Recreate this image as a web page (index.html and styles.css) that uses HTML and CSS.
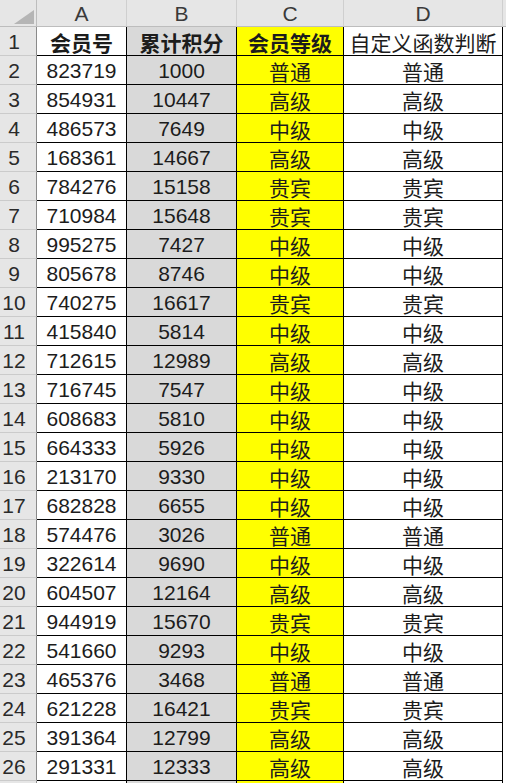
FILE: index.html
```html
<!DOCTYPE html>
<html>
<head>
<meta charset="utf-8">
<link rel="stylesheet" href="styles.css">
</head>
<body>
<div class="sheet">
  <div class="corner"><div class="tri"></div></div>
  <div class="colh">A</div><div class="colh">B</div><div class="colh">C</div><div class="colh">D</div><div class="colh e"></div>

  <div class="rowh">1</div><div class="cell a bold">会员号</div><div class="cell b bold">累计积分</div><div class="cell c bold">会员等级</div><div class="cell d">自定义函数判断</div><div class="ec"></div>
  <div class="rowh">2</div><div class="cell a">823719</div><div class="cell b">1000</div><div class="cell c">普通</div><div class="cell d">普通</div><div class="ec"></div>
  <div class="rowh">3</div><div class="cell a">854931</div><div class="cell b">10447</div><div class="cell c">高级</div><div class="cell d">高级</div><div class="ec"></div>
  <div class="rowh">4</div><div class="cell a">486573</div><div class="cell b">7649</div><div class="cell c">中级</div><div class="cell d">中级</div><div class="ec"></div>
  <div class="rowh">5</div><div class="cell a">168361</div><div class="cell b">14667</div><div class="cell c">高级</div><div class="cell d">高级</div><div class="ec"></div>
  <div class="rowh">6</div><div class="cell a">784276</div><div class="cell b">15158</div><div class="cell c">贵宾</div><div class="cell d">贵宾</div><div class="ec"></div>
  <div class="rowh">7</div><div class="cell a">710984</div><div class="cell b">15648</div><div class="cell c">贵宾</div><div class="cell d">贵宾</div><div class="ec"></div>
  <div class="rowh">8</div><div class="cell a">995275</div><div class="cell b">7427</div><div class="cell c">中级</div><div class="cell d">中级</div><div class="ec"></div>
  <div class="rowh">9</div><div class="cell a">805678</div><div class="cell b">8746</div><div class="cell c">中级</div><div class="cell d">中级</div><div class="ec"></div>
  <div class="rowh">10</div><div class="cell a">740275</div><div class="cell b">16617</div><div class="cell c">贵宾</div><div class="cell d">贵宾</div><div class="ec"></div>
  <div class="rowh">11</div><div class="cell a">415840</div><div class="cell b">5814</div><div class="cell c">中级</div><div class="cell d">中级</div><div class="ec"></div>
  <div class="rowh">12</div><div class="cell a">712615</div><div class="cell b">12989</div><div class="cell c">高级</div><div class="cell d">高级</div><div class="ec"></div>
  <div class="rowh">13</div><div class="cell a">716745</div><div class="cell b">7547</div><div class="cell c">中级</div><div class="cell d">中级</div><div class="ec"></div>
  <div class="rowh">14</div><div class="cell a">608683</div><div class="cell b">5810</div><div class="cell c">中级</div><div class="cell d">中级</div><div class="ec"></div>
  <div class="rowh">15</div><div class="cell a">664333</div><div class="cell b">5926</div><div class="cell c">中级</div><div class="cell d">中级</div><div class="ec"></div>
  <div class="rowh">16</div><div class="cell a">213170</div><div class="cell b">9330</div><div class="cell c">中级</div><div class="cell d">中级</div><div class="ec"></div>
  <div class="rowh">17</div><div class="cell a">682828</div><div class="cell b">6655</div><div class="cell c">中级</div><div class="cell d">中级</div><div class="ec"></div>
  <div class="rowh">18</div><div class="cell a">574476</div><div class="cell b">3026</div><div class="cell c">普通</div><div class="cell d">普通</div><div class="ec"></div>
  <div class="rowh">19</div><div class="cell a">322614</div><div class="cell b">9690</div><div class="cell c">中级</div><div class="cell d">中级</div><div class="ec"></div>
  <div class="rowh">20</div><div class="cell a">604507</div><div class="cell b">12164</div><div class="cell c">高级</div><div class="cell d">高级</div><div class="ec"></div>
  <div class="rowh">21</div><div class="cell a">944919</div><div class="cell b">15670</div><div class="cell c">贵宾</div><div class="cell d">贵宾</div><div class="ec"></div>
  <div class="rowh">22</div><div class="cell a">541660</div><div class="cell b">9293</div><div class="cell c">中级</div><div class="cell d">中级</div><div class="ec"></div>
  <div class="rowh">23</div><div class="cell a">465376</div><div class="cell b">3468</div><div class="cell c">普通</div><div class="cell d">普通</div><div class="ec"></div>
  <div class="rowh">24</div><div class="cell a">621228</div><div class="cell b">16421</div><div class="cell c">贵宾</div><div class="cell d">贵宾</div><div class="ec"></div>
  <div class="rowh">25</div><div class="cell a">391364</div><div class="cell b">12799</div><div class="cell c">高级</div><div class="cell d">高级</div><div class="ec"></div>
  <div class="rowh">26</div><div class="cell a">291331</div><div class="cell b">12333</div><div class="cell c">高级</div><div class="cell d">高级</div><div class="ec"></div>
  <div class="rowh"></div><div class="cell a"></div><div class="cell b"></div><div class="cell c"></div><div class="cell d"></div><div class="ec"></div>
</div>
</body>
</html>
```
FILE: styles.css
```css
html, body {
  margin: 0;
  padding: 0;
  background: #ffffff;
  overflow: hidden;
}

.sheet {
  display: grid;
  grid-template-columns: 37px 90px 110px 107px 159px 3px;
  grid-template-rows: 27px;
  grid-auto-rows: 29px;
  width: 506px;
  font-family: "Liberation Sans", "Noto Sans CJK SC", sans-serif;
  font-size: 21px;
  color: #1c1c1c;
}

.sheet > div {
  box-sizing: border-box;
  display: flex;
  align-items: center;
  justify-content: center;
  white-space: nowrap;
  overflow: hidden;
  padding-top: 2px;
}

.corner {
  background: #e6e6e6;
  border-right: 1px solid #bdbdbd;
  border-bottom: 1px solid #bdbdbd;
  justify-content: flex-end !important;
  align-items: flex-end !important;
  padding: 0 2px 2px 0 !important;
}

.tri {
  width: 20px;
  height: 14px;
  background: #b5b5b5;
  clip-path: polygon(100% 0, 100% 100%, 0 100%);
}

.colh {
  background: #e6e6e6;
  border-right: 1px solid #cfcfcf;
  border-bottom: 1px solid #bdbdbd;
  color: #3a3a3a;
}

.colh.e {
  border-right: none;
}

.rowh {
  background: #e6e6e6;
  border-right: 1px solid #8a8a8a;
  border-bottom: 1px solid #cbcbcb;
  color: #2a2a2a;
  padding-right: 8px;
}

.cell {
  border-right: 1px solid #000000;
  border-bottom: 1px solid #000000;
}

.a { background: #ffffff; }
.b { background: #d9d9d9; }
.c { background: #ffff00; }
.d { background: #ffffff; }

.bold { font-weight: bold; }

.ec {
  background: #ffffff;
}
```
